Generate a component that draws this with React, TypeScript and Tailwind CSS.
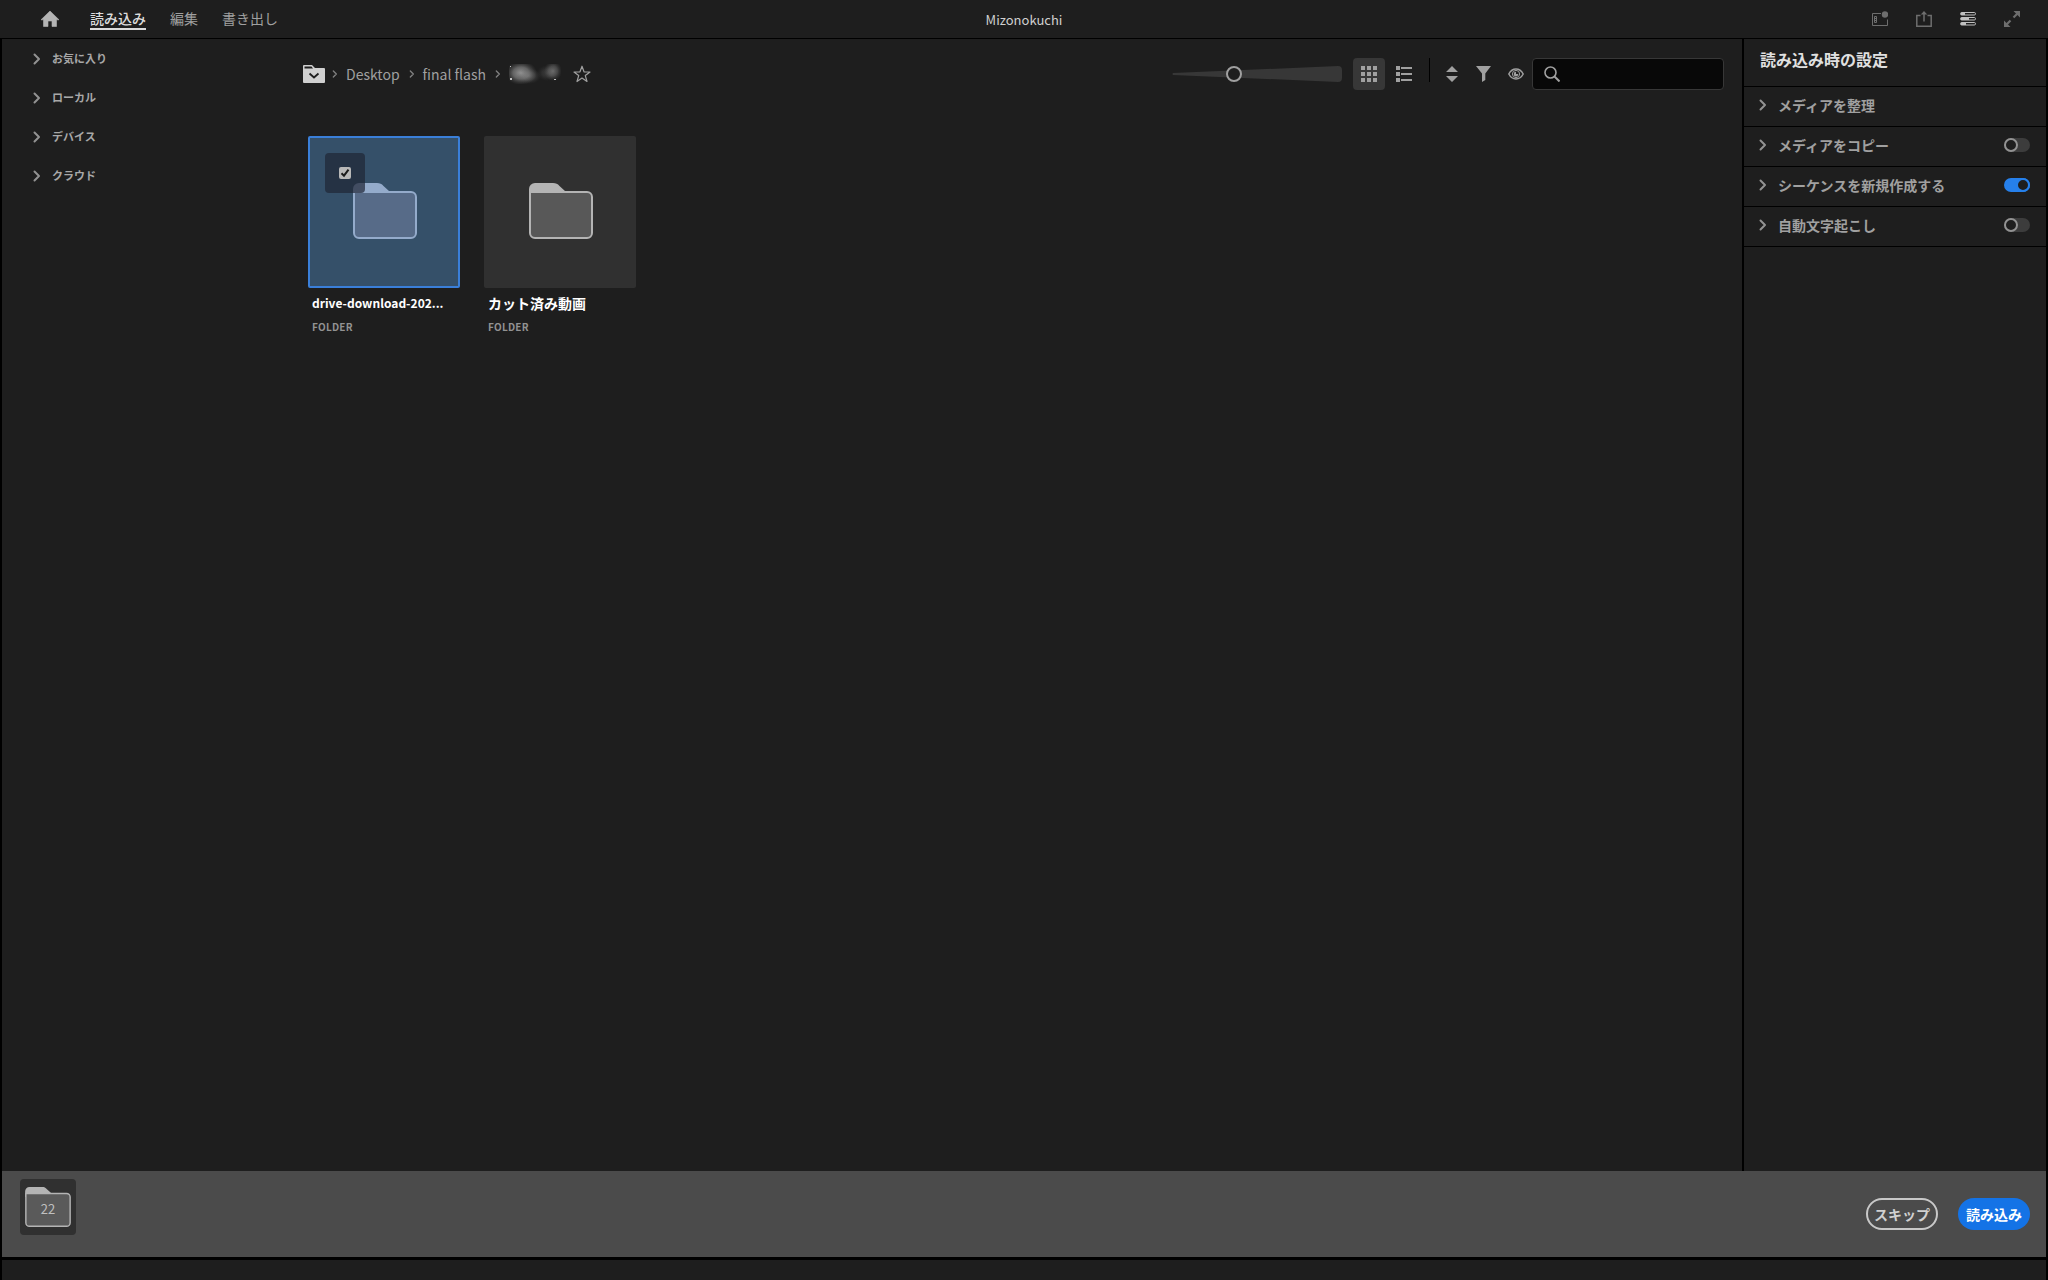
import { useState, type ReactNode } from "react";
import clsx from "clsx";

const TABS = ["読み込み", "編集", "書き出し"];
const SOURCES = ["お気に入り", "ローカル", "デバイス", "クラウド"];

type Setting = { id: string; label: string; enabled?: boolean };

const SETTINGS: Setting[] = [
  { id: "organize", label: "メディアを整理" },
  { id: "copy", label: "メディアをコピー", enabled: false },
  { id: "sequence", label: "シーケンスを新規作成する", enabled: true },
  { id: "transcribe", label: "自動文字起こし", enabled: false },
];

const FOLDERS = [
  { id: "drive", name: "drive-download-202...", selected: true },
  { id: "cut", name: "カット済み動画", selected: false },
];

function Chevron({ className }: { className?: string }) {
  return (
    <svg viewBox="0 0 8 12" className={clsx("shrink-0", className)} fill="none" stroke="currentColor" strokeWidth="2">
      <path d="M1.5 1.5 6 6 1.5 10.5" strokeLinecap="round" strokeLinejoin="round" />
    </svg>
  );
}

function FolderIcon({ className, edge, fill }: { className: string; edge: string; fill: string }) {
  return (
    <svg viewBox="0 0 64 56" className={className}>
      <path d="M0 14V6a6 6 0 0 1 6-6h18c3 0 4.500.8 6.500 3L36 8v2L4 14z" fill={edge} />
      <path
        d="M1 9h57a5 5 0 0 1 5 5v36a5 5 0 0 1-5 5H6a5 5 0 0 1-5-5z"
        fill={fill}
        stroke={edge}
        strokeWidth="2"
      />
    </svg>
  );
}

function IconButton({ label, className, children }: { label: string; className?: string; children: ReactNode }) {
  return (
    <button type="button" aria-label={label} className={clsx("flex shrink-0 items-center justify-center", className)}>
      {children}
    </button>
  );
}

function Header() {
  return (
    <header className="grid h-[39px] shrink-0 grid-cols-[1fr_auto_1fr] items-center border-b border-black">
      <div className="flex h-full items-center pl-10">
        <IconButton label="ホーム" className="text-[#b4b4b4]">
          <svg viewBox="0 0 20 18" className="h-[18px] w-5" fill="currentColor">
            <path d="M10 1 1 9.800h2.500V16.500H8V11h4v5.500h4.500V9.800H19z" stroke="currentColor" strokeLinejoin="round" strokeWidth=".6" />
          </svg>
        </IconButton>
        <nav className="ml-[30px] flex gap-6 text-sm leading-5">
          {TABS.map((tab, i) => (
            <a
              key={tab}
              href="#"
              className={clsx(
                "border-b-2",
                i === 0 ? "border-[#dcdcdc] font-medium text-[#dcdcdc]" : "border-transparent text-[#a0a0a0]",
              )}
            >
              {tab}
            </a>
          ))}
        </nav>
      </div>
      <h1 className="pt-px text-[13px] leading-5 text-[#d0d0d0]">Mizonokuchi</h1>
      <div className="flex items-center justify-end gap-7 pr-7 text-[#6e6e6e]">
        <IconButton label="ワークスペース">
          <svg viewBox="0 0 16 16" className="size-4" fill="none" stroke="currentColor">
            <path d="M9 2.500H.5v12h15V8.500" />
            <path d="M2.500 5.500h2v6h-2zM2.500 7.500h2M2.500 9.500h2" />
            <circle cx="13" cy="3.500" r="3.200" fill="currentColor" stroke="none" />
          </svg>
        </IconButton>
        <IconButton label="クイック書き出し">
          <svg viewBox="0 0 16 16" className="size-4" fill="none" stroke="currentColor" strokeWidth="1.500">
            <path d="M4.500 4.500H.8v10.700h14.400V4.500h-3.700M8 10.500V2" />
            <path d="M8 0 4.800 3.500h6.400z" fill="currentColor" stroke="none" />
          </svg>
        </IconButton>
        <IconButton label="設定" className="text-[#c0c0c0]">
          <svg viewBox="0 0 16 16" className="size-4" fill="none" stroke="currentColor">
            <rect x=".5" y="1.500" width="15" height="2.500" rx="1.200" />
            <rect x=".5" y="6.500" width="15" height="2.500" rx="1.200" />
            <rect x=".5" y="11.500" width="15" height="2.500" rx="1.200" />
            <path d="M1 2.750h4M1 7.750h8M1 12.750h5" strokeWidth="2.500" />
          </svg>
        </IconButton>
        <IconButton label="全画面表示">
          <svg viewBox="0 0 16 16" className="size-4" fill="currentColor">
            <path d="M9.500 0H16v6.500zM0 9.500V16h6.500z" />
            <path d="m13.500 2.500-4 4M2.500 13.500l4-4" stroke="currentColor" strokeWidth="2.200" />
          </svg>
        </IconButton>
      </div>
    </header>
  );
}

function Sidebar() {
  return (
    <aside className="w-[299px] shrink-0">
      <ul>
        {SOURCES.map((name) => (
          <li key={name}>
            <button
              type="button"
              className="flex h-[39px] w-full items-center gap-[11px] pl-[31px] text-[11px] font-bold text-[#a8a8a8]"
            >
              <Chevron className="h-3 w-2 text-[#929292]" />
              {name}
            </button>
          </li>
        ))}
      </ul>
    </aside>
  );
}

function Breadcrumb() {
  return (
    <nav aria-label="パス" className="flex items-center text-sm text-[#a0a0a0]">
      <IconButton label="場所を選択">
        <svg viewBox="0 0 22 18" className="h-[18px] w-[22px]">
          <path d="M0 1a1 1 0 0 1 1-1h8l3 3h9a1 1 0 0 1 1 1v13a1 1 0 0 1-1 1H1a1 1 0 0 1-1-1z" fill="#d0d0d0" />
          <path d="M1.500 1.500h7l1.500 2h-8.500z" fill="#1e1e1e" />
          <path d="m6.500 8.500 4.500 4 4.500-4" fill="none" stroke="#1e1e1e" strokeWidth="1.800" />
        </svg>
      </IconButton>
      <Chevron className="ml-[7px] h-2 w-[6px] text-[#808080]" />
      <a href="#" className="ml-2">Desktop</a>
      <Chevron className="ml-[9px] h-2 w-[6px] text-[#808080]" />
      <a href="#" className="ml-2">final flash</a>
      <Chevron className="ml-[9px] h-2 w-[6px] text-[#808080]" />
      <svg viewBox="0 0 52 20" className="ml-2 h-5 w-[52px]" aria-hidden="true">
        <defs>
          <radialGradient id="smudge">
            <stop offset="0" stopColor="#969696" />
            <stop offset=".5" stopColor="#808080" stopOpacity=".7" />
            <stop offset="1" stopColor="#505050" stopOpacity="0" />
          </radialGradient>
        </defs>
        <ellipse cx="12" cy="9" rx="16" ry="12" fill="url(#smudge)" />
        <ellipse cx="20" cy="12" rx="12" ry="8" fill="url(#smudge)" opacity=".4" />
        <ellipse cx="38" cy="9" rx="10" ry="8" fill="url(#smudge)" opacity=".25" />
        <ellipse cx="44" cy="7" rx="9" ry="10" fill="url(#smudge)" opacity=".6" />
        <path d="M1 2h1v1H1zM1 14h2v2H1zM45 15h2v1h-2z" fill="#c0c0c0" />
      </svg>
      <IconButton label="お気に入りに追加" className="ml-3">
        <svg viewBox="0 0 18 18" className="size-[18px]" fill="none" stroke="currentColor" strokeWidth="1.200">
          <path d="m9 1.200 2 5.600 6 .2-4.700 3.600 1.700 5.900-5-3.400-5 3.400 1.700-5.900L1 7l6-.2z" strokeLinejoin="round" />
        </svg>
      </IconButton>
    </nav>
  );
}

function Toolbar() {
  const [size, setSize] = useState(35);

  return (
    <div className="flex items-center text-[#a0a0a0]">
      <div className="relative h-4 w-[170px]">
        <svg viewBox="0 0 170 16" className="absolute inset-0 h-4 w-[170px]" fill="#373737">
          <path d="M1 7 166 0q4 0 4 4v8q0 4-4 4L1 9q-1-1 0-2z" />
        </svg>
        <input
          type="range"
          aria-label="サムネールのサイズ"
          value={size}
          onChange={(e) => setSize(Number(e.target.value))}
          className="relative block h-4 w-full appearance-none bg-transparent [&::-webkit-slider-thumb]:size-4 [&::-webkit-slider-thumb]:appearance-none [&::-webkit-slider-thumb]:rounded-full [&::-webkit-slider-thumb]:border-2 [&::-webkit-slider-thumb]:border-[#a0a0a0] [&::-webkit-slider-thumb]:bg-[#1e1e1e]"
        />
      </div>
      <IconButton label="グリッド表示" className="ml-[11px] size-8 rounded bg-[#373737]">
        <svg viewBox="0 0 16 16" className="size-4" fill="currentColor">
          <path d="M0 0h4v4H0zM6 0h4v4H6zM12 0h4v4h-4zM0 6h4v4H0zM6 6h4v4H6zM12 6h4v4h-4zM0 12h4v4H0zM6 12h4v4H6zM12 12h4v4h-4z" />
        </svg>
      </IconButton>
      <IconButton label="リスト表示" className="ml-[11px]">
        <svg viewBox="0 0 16 16" className="size-4" fill="currentColor">
          <path d="M0 0h4v4H0zM5 1h11v2H5zM0 6h4v4H0zM5 7h11v2H5zM0 12h4v4H0zM5 13h11v2H5z" />
        </svg>
      </IconButton>
      <div className="ml-[17px] h-6 w-px self-start bg-black" />
      <IconButton label="並べ替え" className="ml-4">
        <svg viewBox="0 0 12 16" className="h-4 w-3" fill="currentColor">
          <path d="m6 0 6 6H0zM6 16l6-6H0z" />
        </svg>
      </IconButton>
      <IconButton label="フィルター" className="ml-[18px]">
        <svg viewBox="0 0 16 16" className="size-4" fill="currentColor">
          <path d="M0 0h15L9.300 7.500V14L6 16V7.500z" />
        </svg>
      </IconButton>
      <IconButton label="表示" className="ml-4">
        <svg viewBox="0 0 16 12" className="h-3 w-4" fill="none" stroke="currentColor" strokeWidth="1.500">
          <path d="M.8 6C2.500 2.800 5 1 8 1s5.500 1.800 7.200 5C13.500 9.200 11 11 8 11S2.500 9.200.8 6z" />
          <circle cx="8" cy="6" r="3.600" strokeWidth="1" />
          <path d="M8 3.800A2.300 2.300 0 1 0 10.300 6H8z" fill="currentColor" stroke="none" />
        </svg>
      </IconButton>
      <label className="ml-2 flex h-8 w-48 items-center rounded border border-[#373737] bg-[#080808] px-[11px]">
        <svg viewBox="0 0 16 16" className="size-4 shrink-0" fill="none" stroke="currentColor" strokeWidth="1.600">
          <circle cx="6.500" cy="6.500" r="5.500" />
          <path d="m10.500 10.500 5 5" strokeWidth="2" />
        </svg>
        <input type="search" aria-label="検索" className="ml-2 min-w-0 flex-1 bg-transparent text-sm outline-none" />
      </label>
    </div>
  );
}

function FolderTile({ name, initial }: { name: string; initial: boolean }) {
  const [selected, setSelected] = useState(initial);
  const latin = /^[\x20-\x7e]+$/.test(name);

  return (
    <li className="w-[152px]">
      <div
        className={clsx(
          "relative flex size-[152px] items-center justify-center rounded-xs border-2 pb-[2px] pl-px",
          selected ? "border-[#3a7fd9] bg-[#355069]" : "border-[#303030] bg-[#303030]",
        )}
        onClick={() => setSelected(!selected)}
      >
        <FolderIcon
          className="h-14 w-16"
          edge={selected ? "#94abcb" : "#b4b4b4"}
          fill={selected ? "#576b88" : "#585858"}
        />
        {selected && (
          <span className="absolute left-[15px] top-[15px] flex size-10 items-center justify-center rounded bg-[#202535]/70">
            <input
              type="checkbox"
              aria-label={name}
              checked
              readOnly
              className="size-3 appearance-none rounded-xs bg-[#b8b8b8]"
            />
            <svg viewBox="0 0 12 12" className="pointer-events-none absolute size-3" fill="none" stroke="#1a1a1a" strokeWidth="2">
              <path d="m2.500 6.200 2.500 2.500 4.500-6" />
            </svg>
          </span>
        )}
      </div>
      <div className="px-1 pt-[5px]">
        <p className={clsx("truncate font-bold leading-5 text-white", latin ? "text-xs/5" : "text-sm/5")}>{name}</p>
        <p className="mt-[6px] text-[10px] font-bold leading-4 tracking-wide text-[#929292]">FOLDER</p>
      </div>
    </li>
  );
}

function SettingRow({ setting }: { setting: Setting }) {
  return (
    <li className="flex h-10 items-center justify-between border-b border-black pb-1 pl-[15px] pr-4">
      <button type="button" id={setting.id} className="flex items-center gap-[11px] text-sm font-bold text-[#a0a0a0]">
        <Chevron className="h-3 w-2 text-[#929292]" />
        {setting.label}
      </button>
      {setting.enabled !== undefined && (
        <input
          type="checkbox"
          role="switch"
          aria-labelledby={setting.id}
          defaultChecked={setting.enabled}
          className="flex h-[14px] w-[26px] appearance-none rounded-full bg-[#3c3c3c] before:size-[14px] before:rounded-full before:border-2 before:border-[#929292] before:bg-[#1e1e1e] checked:justify-end checked:bg-[#2680eb] checked:before:border-[#2680eb]"
        />
      )}
    </li>
  );
}

function SettingsPanel() {
  return (
    <aside className="w-[304px] shrink-0 border-l-2 border-black">
      <h2 className="flex h-12 items-center border-b border-black pb-2 pl-4 text-base font-bold text-[#e0e0e0]">
        読み込み時の設定
      </h2>
      <ul>
        {SETTINGS.map((s) => (
          <SettingRow key={s.id} setting={s} />
        ))}
      </ul>
    </aside>
  );
}

function Footer() {
  return (
    <footer className="mb-5 flex h-[89px] shrink-0 items-start justify-between border-b-3 border-black bg-[#4b4b4b] pl-[18px] pr-4">
      <div className="relative mt-2 flex size-14 items-center justify-center rounded bg-[#303030]">
        <FolderIcon className="h-10 w-[46px]" edge="#b4b4b4" fill="#5a5a5a" />
        <span className="absolute inset-x-0 top-5 text-center text-[13px] leading-5 text-[#c0c0c0]">22</span>
      </div>
      <div className="mt-[27px] flex gap-5 text-sm font-bold">
        <button type="button" className="h-8 w-[72px] rounded-full border-2 border-[#c8c8c8] text-[#d0d0d0]">
          スキップ
        </button>
        <button type="button" className="h-8 w-[72px] rounded-full bg-[#1473e6] text-white">
          読み込み
        </button>
      </div>
    </footer>
  );
}

export default function App() {
  return (
    <div className="flex min-h-screen flex-col bg-[#1e1e1e] font-['Noto_Sans_CJK_JP',sans-serif]">
      <Header />
      <div className="flex flex-1 flex-col border-x-2 border-black">
        <div className="flex flex-1">
          <Sidebar />
          <main className="min-w-0 flex-1">
            <div className="flex items-center justify-between pl-[2px] pr-[18px] pt-[19px]">
              <Breadcrumb />
              <Toolbar />
            </div>
            <ul className="mt-[46px] flex flex-wrap gap-6 pl-[7px]">
              {FOLDERS.map((f) => (
                <FolderTile key={f.id} name={f.name} initial={f.selected} />
              ))}
            </ul>
          </main>
          <SettingsPanel />
        </div>
        <Footer />
      </div>
    </div>
  );
}
